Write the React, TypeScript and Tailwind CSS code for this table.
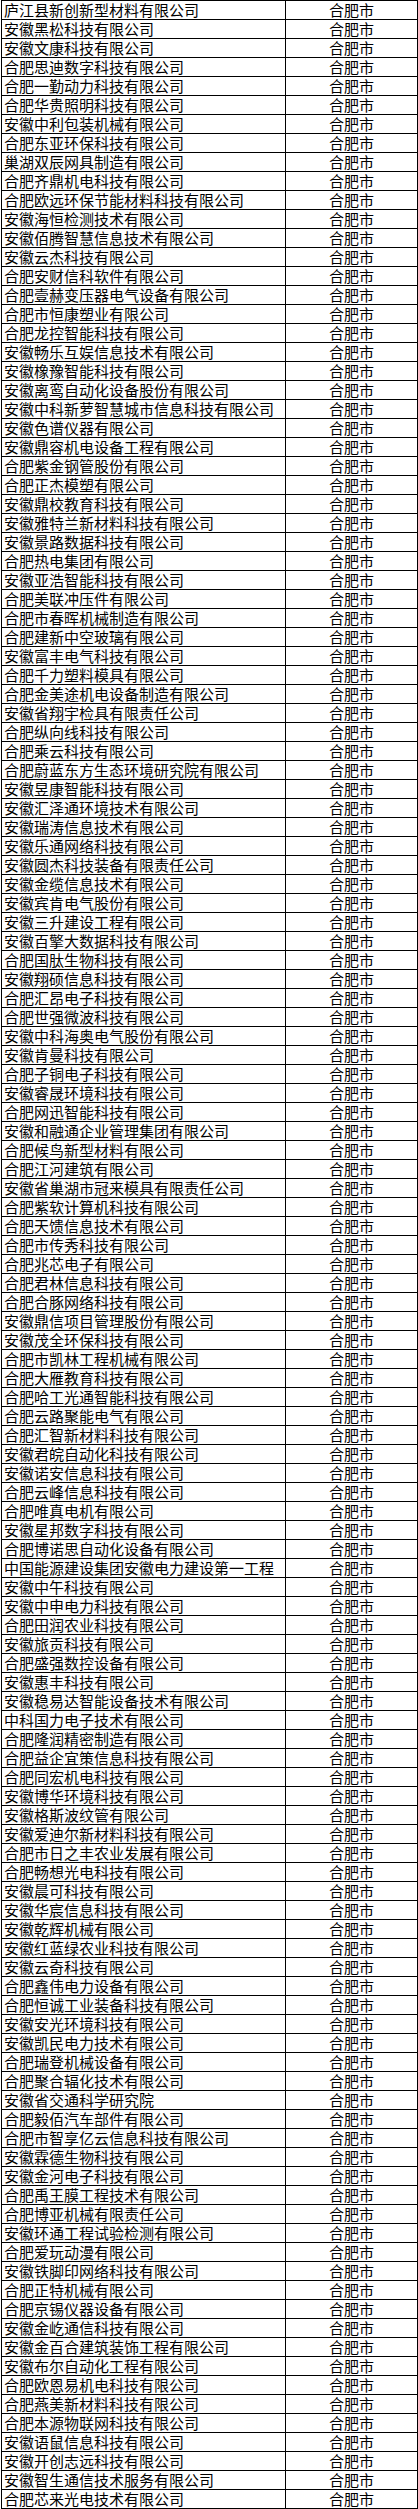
const companies = [
  "庐江县新创新型材料有限公司",
  "安徽黑松科技有限公司",
  "安徽文康科技有限公司",
  "合肥思迪数字科技有限公司",
  "合肥一勤动力科技有限公司",
  "合肥华贵照明科技有限公司",
  "安徽中利包装机械有限公司",
  "合肥东亚环保科技有限公司",
  "巢湖双辰网具制造有限公司",
  "合肥齐鼎机电科技有限公司",
  "合肥欧远环保节能材料科技有限公司",
  "安徽海恒检测技术有限公司",
  "安徽佰腾智慧信息技术有限公司",
  "安徽云杰科技有限公司",
  "合肥安财信科软件有限公司",
  "合肥壹赫变压器电气设备有限公司",
  "合肥市恒康塑业有限公司",
  "合肥龙控智能科技有限公司",
  "安徽畅乐互娱信息技术有限公司",
  "安徽橡豫智能科技有限公司",
  "安徽离鸾自动化设备股份有限公司",
  "安徽中科新萝智慧城市信息科技有限公司",
  "安徽色谱仪器有限公司",
  "安徽鼎容机电设备工程有限公司",
  "合肥紫金钢管股份有限公司",
  "合肥正杰模塑有限公司",
  "安徽鼎校教育科技有限公司",
  "安徽雅特兰新材料科技有限公司",
  "安徽景路数据科技有限公司",
  "合肥热电集团有限公司",
  "安徽亚浩智能科技有限公司",
  "合肥美联冲压件有限公司",
  "合肥市春晖机械制造有限公司",
  "合肥建新中空玻璃有限公司",
  "安徽富丰电气科技有限公司",
  "合肥千力塑料模具有限公司",
  "合肥金美途机电设备制造有限公司",
  "安徽省翔宇检具有限责任公司",
  "合肥纵向线科技有限公司",
  "合肥乘云科技有限公司",
  "合肥蔚蓝东方生态环境研究院有限公司",
  "安徽昱康智能科技有限公司",
  "安徽汇泽通环境技术有限公司",
  "安徽瑞涛信息技术有限公司",
  "安徽乐通网络科技有限公司",
  "安徽圆杰科技装备有限责任公司",
  "安徽金缆信息技术有限公司",
  "安徽宾肯电气股份有限公司",
  "安徽三升建设工程有限公司",
  "安徽百擎大数据科技有限公司",
  "合肥国肽生物科技有限公司",
  "安徽翔硕信息科技有限公司",
  "合肥汇昂电子科技有限公司",
  "合肥世强微波科技有限公司",
  "安徽中科海奥电气股份有限公司",
  "安徽肯曼科技有限公司",
  "合肥子铜电子科技有限公司",
  "安徽睿晟环境科技有限公司",
  "合肥网迅智能科技有限公司",
  "安徽和融通企业管理集团有限公司",
  "合肥候鸟新型材料有限公司",
  "合肥江河建筑有限公司",
  "安徽省巢湖市冠来模具有限责任公司",
  "合肥紫软计算机科技有限公司",
  "合肥天馈信息技术有限公司",
  "合肥市传秀科技有限公司",
  "合肥兆芯电子有限公司",
  "合肥君林信息科技有限公司",
  "合肥合豚网络科技有限公司",
  "安徽鼎信项目管理股份有限公司",
  "安徽茂全环保科技有限公司",
  "合肥市凯林工程机械有限公司",
  "合肥大雁教育科技有限公司",
  "合肥哈工光通智能科技有限公司",
  "合肥云路聚能电气有限公司",
  "合肥汇智新材料科技有限公司",
  "安徽君皖自动化科技有限公司",
  "安徽诺安信息科技有限公司",
  "合肥云峰信息科技有限公司",
  "合肥唯真电机有限公司",
  "安徽星邦数字科技有限公司",
  "合肥博诺思自动化设备有限公司",
  "中国能源建设集团安徽电力建设第一工程",
  "安徽中午科技有限公司",
  "安徽中申电力科技有限公司",
  "合肥田润农业科技有限公司",
  "安徽旅贡科技有限公司",
  "合肥盛强数控设备有限公司",
  "安徽惠丰科技有限公司",
  "安徽稳易达智能设备技术有限公司",
  "中科国力电子技术有限公司",
  "合肥隆润精密制造有限公司",
  "合肥益企宜策信息科技有限公司",
  "合肥同宏机电科技有限公司",
  "安徽博华环境科技有限公司",
  "安徽格斯波纹管有限公司",
  "安徽爱迪尔新材料科技有限公司",
  "合肥市日之丰农业发展有限公司",
  "合肥畅想光电科技有限公司",
  "安徽晨可科技有限公司",
  "安徽华宸信息科技有限公司",
  "安徽乾辉机械有限公司",
  "安徽红蓝绿农业科技有限公司",
  "安徽云奇科技有限公司",
  "合肥鑫伟电力设备有限公司",
  "合肥恒诚工业装备科技有限公司",
  "安徽安光环境科技有限公司",
  "安徽凯民电力技术有限公司",
  "合肥瑞登机械设备有限公司",
  "合肥聚合辐化技术有限公司",
  "安徽省交通科学研究院",
  "合肥毅佰汽车部件有限公司",
  "合肥市智享亿云信息科技有限公司",
  "安徽霖德生物科技有限公司",
  "安徽金河电子科技有限公司",
  "合肥禹王膜工程技术有限公司",
  "合肥博亚机械有限责任公司",
  "安徽环通工程试验检测有限公司",
  "合肥爱玩动漫有限公司",
  "安徽铁脚印网络科技有限公司",
  "合肥正特机械有限公司",
  "合肥京锡仪器设备有限公司",
  "安徽金屹通信科技有限公司",
  "安徽金百合建筑装饰工程有限公司",
  "安徽布尔自动化工程有限公司",
  "合肥欧恩易机电科技有限公司",
  "合肥燕美新材料科技有限公司",
  "合肥本源物联网科技有限公司",
  "安徽语鼠信息科技有限公司",
  "安徽开创志远科技有限公司",
  "安徽智生通信技术服务有限公司",
  "合肥芯来光电技术有限公司",
]

export default function App() {
  return (
    <div className="bg-white min-h-screen font-['Noto_Sans_CJK_SC',sans-serif] text-[15px] text-black">
      <div className="ml-[1px] w-[417px] border-t border-x border-black">
        {companies.map((name, i) => (
          <div key={i} className="flex h-[19px] border-b border-black">
            <div className="w-[284px] shrink-0 border-r border-black pl-[2px] leading-[18px] whitespace-nowrap">
              {name}
            </div>
            <div className="flex-1 text-center leading-[18px] whitespace-nowrap">合肥市</div>
          </div>
        ))}
      </div>
    </div>
  )
}
